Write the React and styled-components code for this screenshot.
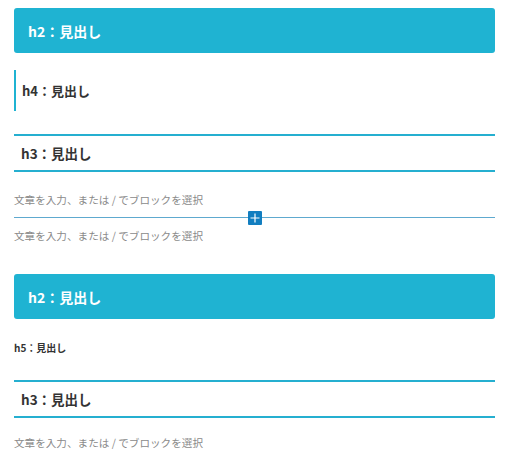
import React from "react";
import styled, { createGlobalStyle } from "styled-components";

const GlobalStyle = createGlobalStyle`
  html, body {
    margin: 0;
    padding: 0;
    background: #ffffff;
  }
  body {
    font-family: "Noto Sans CJK JP", "Noto Sans", sans-serif;
  }
`;

function App() {
  return (
    <Editor>
      <GlobalStyle />
      <H2Block>h2：見出し</H2Block>
      <H4Block>h4：見出し</H4Block>
      <H3Block top={23}>h3：見出し</H3Block>
      <Paragraph top={19}>文章を入力、または / でブロックを選択</Paragraph>
      <Inserter>
        <InsertLine />
        <InsertButton>
          <svg width="10" height="10" viewBox="0 0 10 10">
            <path d="M5 0.5v9M0.5 5h9" stroke="#fff" strokeWidth="1.2" />
          </svg>
        </InsertButton>
      </Inserter>
      <Paragraph>文章を入力、または / でブロックを選択</Paragraph>
      <H2Block top={29}>h2：見出し</H2Block>
      <H5Block>h5：見出し</H5Block>
      <H3Block top={25}>h3：見出し</H3Block>
      <Paragraph top={16}>文章を入力、または / でブロックを選択</Paragraph>
    </Editor>
  );
}

export default App;

const Editor = styled.div`
  padding: 8px 14px;
  display: flex;
  flex-direction: column;
`;

const H2Block = styled.h2`
  margin: ${(props) => props.top || 0}px 0 0;
  height: 45px;
  display: flex;
  align-items: center;
  padding: 0 14px;
  background: #1fb3d2;
  border-radius: 3px;
  color: #ffffff;
  font-size: 14px;
  font-weight: 700;
`;

const H4Block = styled.h4`
  margin: 17px 0 0;
  height: 41px;
  display: flex;
  align-items: center;
  padding-left: 6px;
  border-left: 2px solid #1fb3d2;
  color: #333333;
  font-size: 13px;
  font-weight: 700;
`;

const H3Block = styled.h3`
  margin: ${(props) => props.top || 0}px 0 0;
  height: 34px;
  display: flex;
  align-items: center;
  padding-left: 7px;
  border-top: 2px solid #25afd0;
  border-bottom: 2px solid #25afd0;
  color: #333333;
  font-size: 13.5px;
  font-weight: 700;
`;

const H5Block = styled.h5`
  margin: 22px 0 0;
  line-height: 14px;
  color: #333333;
  font-size: 10px;
  font-weight: 700;
`;

const Paragraph = styled.p`
  margin: ${(props) => props.top || 0}px 0 0;
  line-height: 18px;
  color: #8a8a8a;
  font-size: 10.6px;
`;

const Inserter = styled.div`
  position: relative;
  height: 18px;
  display: flex;
  align-items: center;
  justify-content: center;
`;

const InsertLine = styled.div`
  position: absolute;
  left: 0;
  right: 0;
  top: 8px;
  height: 1px;
  background: #5ea9cf;
`;

const InsertButton = styled.div`
  position: relative;
  width: 14px;
  height: 14px;
  margin-top: -1px;
  background: #127ec0;
  border-radius: 1px;
  display: flex;
  align-items: center;
  justify-content: center;
`;
